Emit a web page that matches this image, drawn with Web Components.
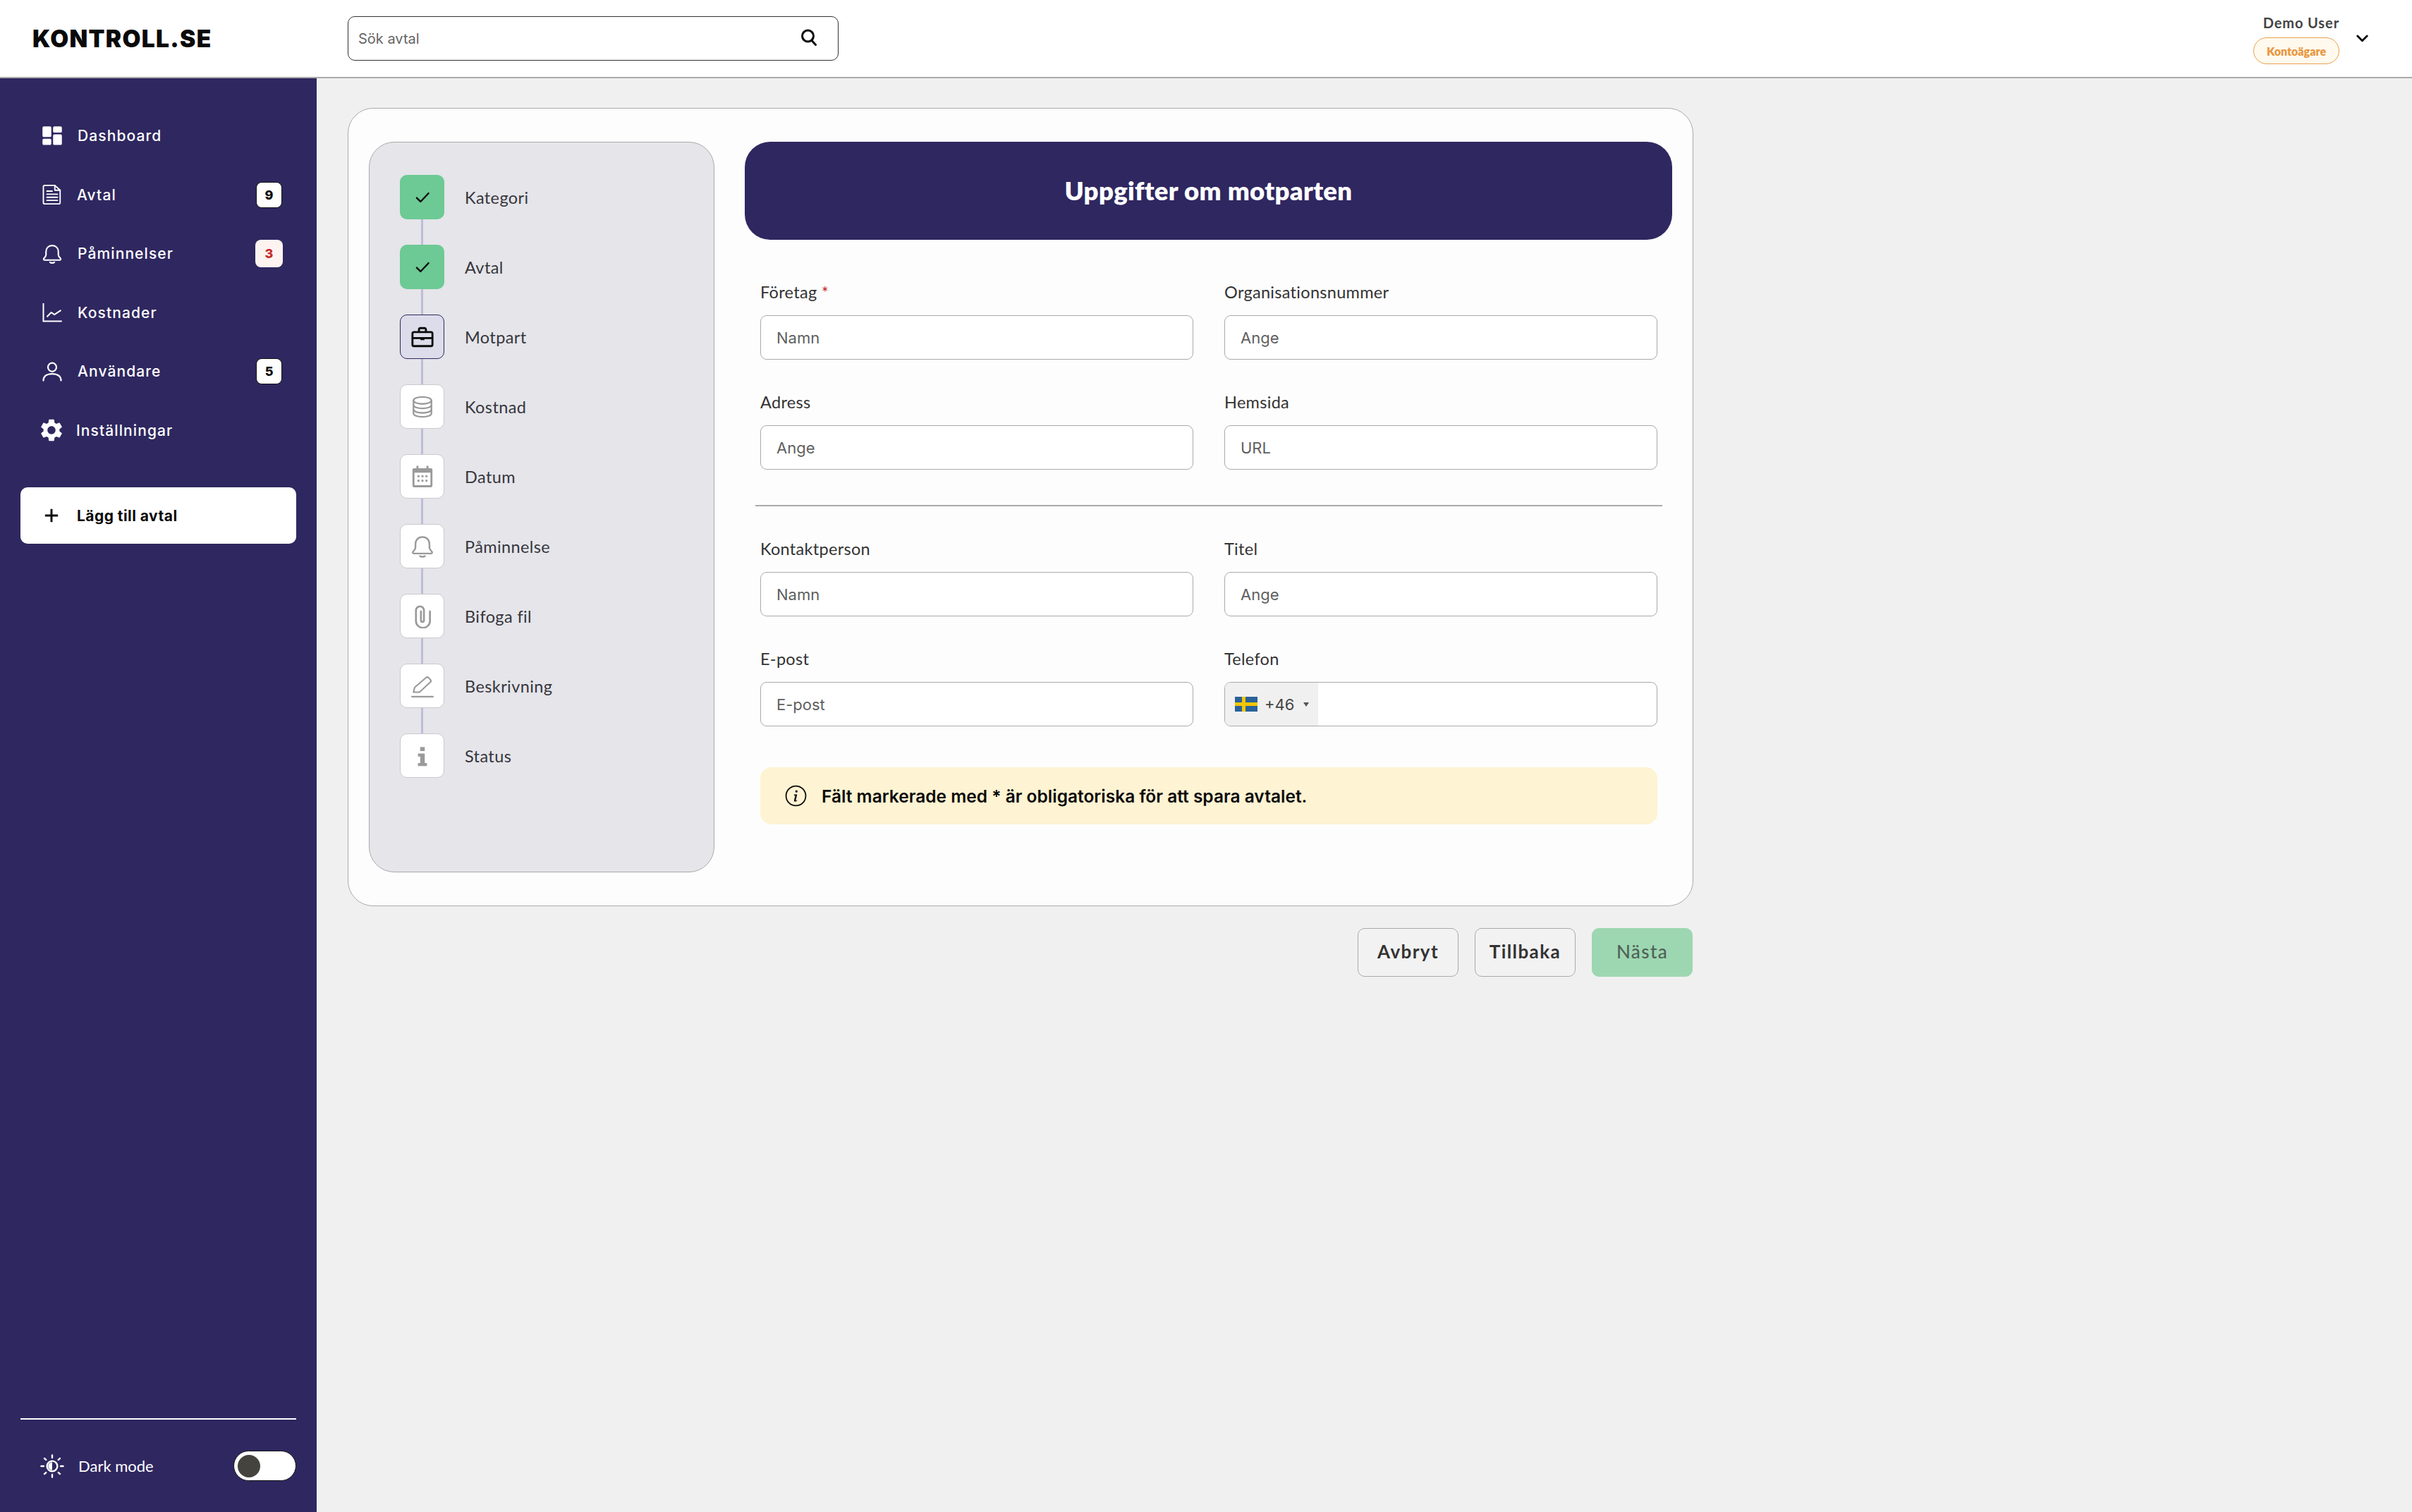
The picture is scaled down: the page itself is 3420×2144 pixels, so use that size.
<!DOCTYPE html>
<html lang="sv">
<head>
<meta charset="utf-8">
<title>Kontroll.se</title>
<style>
    html, body { margin: 0; padding: 0; height: 100%; background: #f0f0f0; }
</style>
</head>
<body>
<app-shell>
    <app-header slot="header"></app-header>
    <app-sidebar slot="sidebar">
        <nav-item icon="dashboard" label="Dashboard"></nav-item>
        <nav-item icon="doc" label="Avtal" badge="9" nudge="-1"></nav-item>
        <nav-item icon="bell" label="Påminnelser" badge="3" alert></nav-item>
        <nav-item icon="chart" label="Kostnader"></nav-item>
        <nav-item icon="user" label="Användare" badge="5"></nav-item>
        <nav-item icon="gear" label="Inställningar" nudge="-3"></nav-item>
    </app-sidebar>
    <wizard-card>
        <step-rail slot="rail">
            <step-item label="Kategori" state="done" icon="check"></step-item>
            <step-item label="Avtal" state="done" icon="check"></step-item>
            <step-item label="Motpart" state="current" icon="briefcase"></step-item>
            <step-item label="Kostnad" icon="coins"></step-item>
            <step-item label="Datum" icon="calendar"></step-item>
            <step-item label="Påminnelse" icon="bell"></step-item>
            <step-item label="Bifoga fil" icon="clip"></step-item>
            <step-item label="Beskrivning" icon="pen"></step-item>
            <step-item label="Status" icon="info" last></step-item>
        </step-rail>
        <form-section title="Uppgifter om motparten">
            <form-field label="Företag" hint="Namn" required></form-field>
            <form-field label="Organisationsnummer" hint="Ange"></form-field>
            <form-field label="Adress" hint="Ange"></form-field>
            <form-field label="Hemsida" hint="URL"></form-field>
            <section-rule></section-rule>
            <form-field label="Kontaktperson" hint="Namn"></form-field>
            <form-field label="Titel" hint="Ange"></form-field>
            <form-field label="E-post" hint="E-post"></form-field>
            <phone-field label="Telefon" code="+46"></phone-field>
            <notice-box>Fält markerade med * är obligatoriska för att spara avtalet.</notice-box>
        </form-section>
    </wizard-card>
    <wizard-actions></wizard-actions>
</app-shell>

<script>
// all icons on a 24 box, painted with currentColor
const ICONS = {
    dashboard: '<path fill="currentColor" d="M1 2.5A1.5 1.5 0 0 1 2.500 1h7A1.500 1.500 0 0 1 11 2.500v9A1.500 1.500 0 0 1 9.500 13h-7A1.500 1.500 0 0 1 1 11.500zM1 16.500A1.500 1.500 0 0 1 2.500 15h7a1.500 1.500 0 0 1 1.500 1.500v4A1.500 1.500 0 0 1 9.500 22h-7A1.500 1.500 0 0 1 1 20.500zM13 2.500A1.500 1.500 0 0 1 14.500 1h7A1.500 1.500 0 0 1 23 2.500v4A1.500 1.500 0 0 1 21.500 8h-7A1.500 1.500 0 0 1 13 6.500zM13 11.500a1.500 1.500 0 0 1 1.500-1.500h7a1.500 1.500 0 0 1 1.500 1.500v9a1.500 1.500 0 0 1-1.500 1.500h-7a1.500 1.500 0 0 1-1.500-1.500z"/>',
    doc: '<g fill="none" stroke="currentColor" stroke-width="1.500" stroke-linejoin="round" stroke-linecap="round"><path d="M3.500 1.500h11.500l6 5.500v14a1.500 1.500 0 0 1-1.500 1.500h-16A1.500 1.500 0 0 1 2 21V3a1.500 1.500 0 0 1 1.500-1.500z"/><path d="M15 1.500V7h6"/><path d="M6 8h6M6 11.500h12M6 15h12M6 18.500h12"/></g>',
    bell: '<g fill="none" stroke="currentColor" stroke-width="1.700" stroke-linecap="round" stroke-linejoin="round"><path d="M12 2.500c-4.200 0-7 3-7 7v3.500c0 2-1.500 3-2.500 4.200-.5.700 0 1.800 1 1.800h17c1 0 1.500-1.100 1-1.800-1-1.200-2.500-2.200-2.500-4.200V9.500c0-4-2.800-7-7-7z"/><path d="M9.500 21.500c1.200 1 3.800 1 5 0"/></g>',
    chart: '<g fill="none" stroke="currentColor" stroke-width="1.600"><path d="M2 1.500V22h21"/><path d="M6 17l5-5 3.500 2.500L22 9.500" stroke-linejoin="round"/></g>',
    user: '<g fill="none" stroke="currentColor" stroke-width="1.800"><circle cx="12" cy="7" r="4.800"/><path d="M2 22c0-5 4-7.500 10-7.500S22 17 22 22" stroke-linecap="round"/></g>',
    gear: '<path fill="currentColor" d="M19.140 12.940c.04-.3.06-.61.06-.94 0-.32-.02-.64-.07-.94l2.030-1.580c.18-.14.23-.41.12-.61l-1.920-3.320c-.12-.22-.37-.29-.59-.22l-2.390.96c-.5-.38-1.030-.7-1.620-.94l-.36-2.540c-.04-.24-.24-.41-.48-.41h-3.840c-.24 0-.43.17-.47.41l-.36 2.540c-.59.24-1.130.57-1.620.94l-2.390-.96c-.22-.08-.47 0-.59.22L2.740 8.870c-.12.21-.08.47.12.61l2.030 1.580c-.05.3-.09.63-.09.94s.02.64.07.94l-2.030 1.580c-.18.14-.23.41-.12.61l1.920 3.320c.12.22.37.29.59.22l2.390-.96c.5.38 1.030.7 1.620.94l.36 2.54c.05.24.24.41.48.41h3.840c.24 0 .44-.17.47-.41l.36-2.540c.59-.24 1.130-.56 1.620-.94l2.390.96c.22.08.47 0 .59-.22l1.920-3.320c.12-.22.07-.47-.12-.61l-2.010-1.580zM12 15.600c-1.980 0-3.600-1.620-3.600-3.600s1.620-3.600 3.600-3.600 3.600 1.620 3.600 3.600-1.620 3.600-3.600 3.600z"/>',
    check: '<path fill="none" stroke="currentColor" stroke-width="2.200" stroke-linecap="round" stroke-linejoin="round" d="M4.500 12.500l5 5L20 6.500"/>',
    briefcase: '<g fill="none" stroke="currentColor" stroke-width="2" stroke-linejoin="round"><rect x="2" y="7" width="20" height="14" rx="1.500"/><path d="M8.500 7V4.500A1.500 1.500 0 0 1 10 3h4a1.500 1.500 0 0 1 1.500 1.500V7"/><path d="M2 13h20"/></g><rect x="10" y="12" width="4" height="3" fill="currentColor"/>',
    coins: '<g fill="none" stroke="currentColor" stroke-width="1.600"><ellipse cx="12" cy="5.500" rx="9" ry="3.500"/><path d="M3 5.500v13c0 2 4 3.500 9 3.500s9-1.500 9-3.500v-13"/><path d="M3 10c0 2 4 3.500 9 3.500s9-1.500 9-3.500M3 14.500c0 2 4 3.500 9 3.500s9-1.500 9-3.500"/></g>',
    calendar: '<path fill="currentColor" fill-rule="evenodd" d="M6 1h2v2.500h8V1h2v2.500h2.500A1.500 1.500 0 0 1 22 5v16a1.500 1.500 0 0 1-1.500 1.500h-17A1.500 1.500 0 0 1 2 21V5a1.500 1.500 0 0 1 1.500-1.500H6zM4 8v12.500h16V8z"/><g fill="currentColor"><rect x="7" y="10.500" width="2" height="2"/><rect x="11" y="10.500" width="2" height="2"/><rect x="15" y="10.500" width="2" height="2"/><rect x="7" y="15" width="2" height="2"/><rect x="11" y="15" width="2" height="2"/><rect x="15" y="15" width="2" height="2"/></g>',
    clip: '<path fill="none" stroke="currentColor" stroke-width="1.900" stroke-linecap="round" d="M19.500 7v9.500a7 7 0 0 1-14 0V6a4 4 0 0 1 8 0v10a1.500 1.500 0 0 1-3 0V7"/>',
    pen: '<g fill="none" stroke="currentColor" stroke-width="1.500" stroke-linejoin="round" stroke-linecap="round"><path d="M3 18l1.200-4.800L15.500 3.500c.8-.7 1.900-.6 2.600.1l1.800 1.800c.7.800.7 1.900 0 2.600L9 18z"/><path d="M1.500 22.500h21"/></g>',
    info: '<path fill="currentColor" d="M9.700 3h4.600v4h-4.600zM7.500 9.500h6.800V19h2.200v3H7.500v-3h2.300v-6.500H7.500z"/>',
    search: '<g fill="none" stroke="currentColor" stroke-width="3" stroke-linecap="round"><circle cx="10.500" cy="10" r="8"/><path d="M16 16.500l5.500 6"/></g>',
    chevron: '<path fill="none" stroke="currentColor" stroke-width="4" stroke-linecap="round" stroke-linejoin="round" d="M2.500 7l9.500 9.500L21.500 7"/>',
    plus: '<path fill="none" stroke="currentColor" stroke-width="3.200" d="M12 2v20M2 12h20"/>',
    sun: '<g fill="none" stroke="currentColor" stroke-width="1.700" stroke-linecap="round"><circle cx="12" cy="12" r="5.200"/><path d="M12 1v2.500M12 20.500V23M1 12h2.500M20.500 12H23M4.200 4.200l1.700 1.500M18.100 18.300l1.700 1.500M19.800 4.200l-1.700 1.500M5.900 18.300l-1.700 1.500"/></g><path fill="currentColor" d="M12 8a4 4 0 0 0 0 8z"/>',
    circleInfo: '<circle cx="12" cy="12" r="10.800" fill="none" stroke="currentColor" stroke-width="1.400"/><path fill="currentColor" d="M12.600 5.800a1.300 1.300 0 1 1 0 2.600 1.300 1.300 0 0 1 0-2.600zM10 10.500h3.400l-1.500 6.300c-.1.500.4.600 1.400.1l.1.600c-1.200 1-3.700 1.400-3.400-.6l1.200-5.100-1.300-.4z"/>',
};

function icon(name, size, w) {
    return `<svg xmlns="http://www.w3.org/2000/svg" viewBox="0 0 24 24" width="${w || size}" height="${size}">${ICONS[name]}</svg>`;
}

// small helper so each element only writes its template
class Base extends HTMLElement {
    render(html) {
        const template = document.createElement('template');
        template.innerHTML = html;
        this.attachShadow({mode: 'open'});
        this.shadowRoot.append(template.content.cloneNode(true));
    }
}

class AppShell extends Base {
    constructor() {
        super();
        this.render(`
        <style>
            :host { display: flex; flex-direction: column; height: 2144px; width: 3420px; overflow: hidden; background: #f0f0f0; }
            .body { display: flex; flex: 1; min-height: 0; }
            main { flex: 1; padding: 42px 0 0 44px; display: flex; flex-direction: column; align-items: flex-start; gap: 31px; }
        </style>
        <slot name="header"></slot>
        <div class="body">
            <slot name="sidebar"></slot>
            <main><slot></slot></main>
        </div>`);
    }
}

class AppHeader extends Base {
    constructor() {
        super();
        this.render(`
        <style>
            :host { display: flex; align-items: center; height: 109px; flex: none; background: #fff; border-bottom: 2px solid #aaa; box-sizing: content-box; }
            .logo { width: 493px; box-sizing: border-box; padding-left: 46px; font: 900 33.500px Inter, sans-serif; letter-spacing: 1.300px; color: #0a0a0a; }
            .search { width: 696px; height: 63px; box-sizing: border-box; border: 1.500px solid #333; border-radius: 10px; display: flex; align-items: center; justify-content: space-between; padding: 0 29px 0 14px; font: 400 20px Inter, sans-serif; color: #666; }
            .search svg { color: #0a0a0a; display: block; margin-top: -4px; }
            .user { margin-left: auto; display: flex; align-items: flex-start; padding-right: 62px; }
            .who { display: flex; flex-direction: column; align-items: flex-end; gap: 7px; }
            .name { font: 700 20px/28px Lato, sans-serif; letter-spacing: .9px; color: #444; }
            .role { height: 38px; width: 122px; box-sizing: border-box; display: flex; align-items: center; justify-content: center; border: 1.500px solid #e8a24e; border-radius: 19px; background: #fff9ee; color: #e8963c; font: 800 16px Lato, sans-serif; }
            .chevron { margin: 28px 0 0 24px; color: #0a0a0a; display: block; }
        </style>
        <div class="logo">KONTROLL.SE</div>
        <div class="search"><span>Sök avtal</span>${icon('search', 24)}</div>
        <div class="user">
            <div class="who"><span class="name">Demo User</span><span class="role">Kontoägare</span></div>
            <span class="chevron">${icon('chevron', 17)}</span>
        </div>`);
    }
}

class AppSidebar extends Base {
    constructor() {
        super();
        this.render(`
        <style>
            :host { display: flex; flex-direction: column; width: 449px; flex: none; box-sizing: border-box; background: #2f2760; padding: 40px 29px 0; color: #fff; }
            .add { margin-top: 39px; height: 80px; border-radius: 10px; background: #fff; color: #0a0a0a; display: flex; align-items: center; gap: 25px; padding-left: 33px; font: 700 21px Inter, sans-serif; letter-spacing: .45px; }
            .add svg { display: block; }
            .foot { margin-top: auto; border-top: 2px solid #fff; height: 133px; box-sizing: border-box; display: flex; align-items: center; padding: 0 0 0 28px; gap: 20px; font: 400 22px Lato, sans-serif; letter-spacing: 0; }
            .foot svg { display: block; }
            .switch { margin-left: auto; width: 89px; height: 43px; box-sizing: border-box; border-radius: 22px; background: #fff; border: 1.500px solid #111; display: flex; align-items: center; padding-left: 5px; }
            .switch i { display: block; width: 32px; height: 32px; border-radius: 50%; background: #45433e; }
        </style>
        <slot></slot>
        <div class="add">${icon('plus', 22)}<span>Lägg till avtal</span></div>
        <div class="foot">${icon('sun', 34)}<span>Dark mode</span><span class="switch"><i></i></span></div>`);
    }
}

class NavItem extends Base {
    connectedCallback() {
        if (this.shadowRoot) return;
        const badge = this.getAttribute('badge');
        const nudge = parseInt(this.getAttribute('nudge') || '0');
        const big = this.getAttribute('icon') === 'gear';
        this.render(`
        <style>
            :host { display: flex; align-items: center; height: 83.500px; padding: 0 20px 0 ${big ? 25 : 30}px; gap: ${big ? 16 : 21 + nudge}px; font: 500 21px Inter, sans-serif; letter-spacing: 1.100px; color: #fff; }
            svg { display: block; flex: none; }
            .badge { margin-left: auto; width: 37px; height: 37px; box-sizing: border-box; border-radius: 8px; background: #fff; border: 1px solid #111; color: #0a0a0a; display: flex; align-items: center; justify-content: center; font: 800 18px Inter, sans-serif; letter-spacing: 0; }
            .badge.alert { background: #fdf3f1; color: #c42b2b; border-color: transparent; width: 39px; height: 39px; margin-right: -1px; }
        </style>
        ${icon(this.getAttribute('icon'), big ? 38 : 30)}
        <span>${this.getAttribute('label')}</span>
        ${badge ? `<span class="badge ${this.hasAttribute('alert') ? 'alert' : ''}">${badge}</span>` : ''}`);
    }
}

class WizardCard extends Base {
    constructor() {
        super();
        this.render(`
        <style>
            :host { display: flex; gap: 43px; width: 1908px; height: 1132px; box-sizing: border-box; padding: 47px 28px 47px 29px; background: #fdfdfd; border: 1.500px solid #aaa; border-radius: 36px; }
        </style>
        <slot name="rail"></slot>
        <slot></slot>`);
    }
}

class StepRail extends Base {
    constructor() {
        super();
        this.render(`
        <style>
            :host { display: block; width: 490px; flex: none; box-sizing: border-box; padding: 46px 43px; background: #e5e5ea; border: 1.500px solid #aaa; border-radius: 36px; }
        </style>
        <slot></slot>`);
    }
}

class StepItem extends Base {
    connectedCallback() {
        if (this.shadowRoot) return;
        const state = this.getAttribute('state') || 'todo';
        this.render(`
        <style>
            :host { display: block; font: 400 23.500px Lato, sans-serif; letter-spacing: .4px; color: #36363c; }
            .row { display: flex; align-items: center; gap: 29px; height: 63px; }
            .box { width: 63px; height: 63px; box-sizing: border-box; border-radius: 10px; display: flex; align-items: center; justify-content: center; flex: none; }
            .todo { background: #fff; border: 1px solid #c9c9cf; color: #9a9a9a; }
            .done { background: #6dca94; color: #0a0a0a; }
            .current { background: #dddcea; border: 1.500px solid #2f2760; color: #0a0a0a; }
            .line { width: 3px; height: 36px; margin-left: 30px; background: #bfbcd8; }
            svg { display: block; }
        </style>
        <div class="row"><span class="box ${state}">${icon(this.getAttribute('icon'), state === 'done' ? 26 : 34)}</span><span>${this.getAttribute('label')}</span></div>
        ${this.hasAttribute('last') ? '' : '<div class="line"></div>'}`);
    }
}

class FormSection extends Base {
    connectedCallback() {
        if (this.shadowRoot) return;
        this.render(`
        <style>
            :host { display: block; width: 1315px; flex: none; }
            h1 { margin: 0; height: 139px; box-sizing: border-box; padding-bottom: 2px; border-radius: 36px; background: #2f2760; color: #fff; display: flex; align-items: center; justify-content: center; font: 800 36.500px Lato, sans-serif; letter-spacing: .3px; }
            .grid { display: grid; grid-template-columns: 614px 614px; column-gap: 44px; row-gap: 43px; padding: 57px 21px 0 22px; }
            ::slotted(section-rule), ::slotted(notice-box) { grid-column: 1 / -1; }
        </style>
        <h1>${this.getAttribute('title')}</h1>
        <div class="grid"><slot></slot></div>`);
    }
}

class FormField extends Base {
    connectedCallback() {
        if (this.shadowRoot) return;
        this.render(`
        <style>
            :host { display: flex; flex-direction: column; gap: 16px; }
            label { font: 400 23.500px/34px Lato, sans-serif; letter-spacing: .3px; color: #333; }
            b { color: #c42b2b; font-weight: 400; }
            .box { height: 63px; box-sizing: border-box; background: #fff; border: 1.500px solid #aaa; border-radius: 9px; display: flex; align-items: center; padding-left: 22px; font: 400 22px Inter, sans-serif; color: #5f5f5f; }
        </style>
        <label>${this.getAttribute('label')}${this.hasAttribute('required') ? ' <b>*</b>' : ''}</label>
        <div class="box">${this.getAttribute('hint')}</div>`);
    }
}

class PhoneField extends Base {
    connectedCallback() {
        if (this.shadowRoot) return;
        this.render(`
        <style>
            :host { display: flex; flex-direction: column; gap: 16px; }
            label { font: 400 23.500px/34px Lato, sans-serif; letter-spacing: .3px; color: #333; }
            .box { height: 63px; box-sizing: border-box; background: #fff; border: 1.500px solid #aaa; border-radius: 9px; display: flex; overflow: hidden; }
            .code { width: 132px; background: #f0f0f0; display: flex; align-items: center; padding-left: 14px; box-sizing: border-box; gap: 10px; font: 400 22px Inter, sans-serif; color: #444; }
            .caret { width: 0; height: 0; border: 4px solid transparent; border-top: 6px solid #555; border-bottom: 0; margin-left: 3px; }
            svg { display: block; }
        </style>
        <label>${this.getAttribute('label')}</label>
        <div class="box"><div class="code">
            <svg xmlns="http://www.w3.org/2000/svg" width="32" height="21" viewBox="0 0 32 21"><rect width="32" height="21" fill="#2a6299"/><path fill="#f2c500" d="M10 0h5v21h-5zM0 8h32v5H0z"/></svg>
            <span>${this.getAttribute('code')}</span><span class="caret"></span>
        </div></div>`);
    }
}

class SectionRule extends Base {
    constructor() {
        super();
        this.render(`
        <style>
            :host { display: block; height: 2px; margin: 7px -7px 0; background: #aaa; }
        </style>`);
    }
}

class NoticeBox extends Base {
    constructor() {
        super();
        this.render(`
        <style>
            :host { display: flex; align-items: center; gap: 21px; height: 81px; margin-top: 15px; padding-left: 35px; box-sizing: border-box; border-radius: 16px; background: #fef3d2; color: #0a0a0a; font: 600 24.500px Inter, sans-serif; }
            svg { display: block; flex: none; }
        </style>
        ${icon('circleInfo', 31)}<span><slot></slot></span>`);
    }
}

class WizardActions extends Base {
    constructor() {
        super();
        this.render(`
        <style>
            :host { display: flex; justify-content: flex-end; gap: 23px; width: 1907px; }
            button { width: 143px; height: 69px; box-sizing: border-box; padding: 0 0 3px; border: 1.500px solid #aaa; border-radius: 10px; background: #f2f2f2; color: #333; font: 700 26px Lato, sans-serif; letter-spacing: 1.400px; }
            .next { background: #9dd7b1; border-color: #9dd7b1; color: #4f6157; font-weight: 500; }
        </style>
        <button>Avbryt</button><button>Tillbaka</button><button class="next">Nästa</button>`);
    }
}

customElements.define('app-shell', AppShell);
customElements.define('app-header', AppHeader);
customElements.define('app-sidebar', AppSidebar);
customElements.define('nav-item', NavItem);
customElements.define('wizard-card', WizardCard);
customElements.define('step-rail', StepRail);
customElements.define('step-item', StepItem);
customElements.define('form-section', FormSection);
customElements.define('form-field', FormField);
customElements.define('phone-field', PhoneField);
customElements.define('section-rule', SectionRule);
customElements.define('notice-box', NoticeBox);
customElements.define('wizard-actions', WizardActions);
</script>
</body>
</html>
